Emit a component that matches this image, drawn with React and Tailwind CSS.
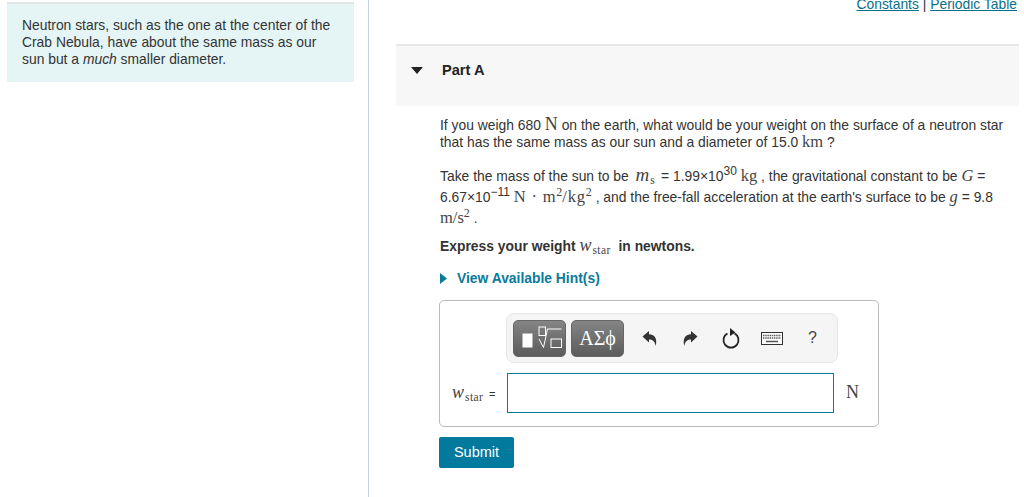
import React from "react";

const M = ({ children, i, c = "" }) => (
  <span className={`font-['Liberation_Serif',serif] text-[16.5px] leading-[0] text-[#444] ${i ? "italic" : ""} ${c}`}>{children}</span>
);
const Sup = ({ children }) => <span className="text-[12px] align-[6px] leading-[0] tracking-normal">{children}</span>;
const Sub = ({ children }) => <span className="text-[11.5px] align-[-3px] leading-[0] not-italic font-['Liberation_Serif',serif] tracking-[0.4px]">{children}</span>;

const Undo = ({ flip }) => (
  <svg width="16" height="17" viewBox="0 0 16 17" className={flip ? "-scale-x-100" : ""}>
    <path d="M0.5 6.5 L7 1 V4.2 C12 4.2 15.5 7.5 13.8 16 C12.8 11 10.6 9.4 7 9.4 V12.4 Z" fill="#333" />
  </svg>
);

export default function App() {
  return (
    <div className="w-[1024px] h-[497px] overflow-hidden flex bg-white font-['Liberation_Sans',Arial,sans-serif] text-[#333] text-[13.86px]">
      <div className="w-[369px] h-full shrink-0 border-r border-[#c3d4e8] pt-[2px] pl-[7px] pr-[14px]">
        <div className="h-[80px] bg-[#e5f5f6] border-t-2 border-[#e3e6e8] pt-[13px] pl-[15px] leading-[17px]">
          Neutron stars, such as the one at the center of the<br />
          Crab Nebula, have about the same mass as our<br />
          sun but a <em>much</em> smaller diameter.
        </div>
      </div>

      <div className="flex-1 pl-[27px] pr-[5px]">
        <div className="h-[44px] -mt-[4px] pr-[2px] text-right leading-[17px] text-[#333]">
          <a className="underline text-[#0a6f8a]">Constants</a> | <a className="underline text-[#0a6f8a]">Periodic Table</a>
        </div>

        <div className="h-[62px] mt-[4px] bg-[#f7f7f7] border-t-2 border-[#e8e8e8] flex items-center pb-[10px]">
          <svg width="12" height="8" viewBox="0 0 12 8" className="ml-[15px]">
            <path d="M0 0 H12 L6 7 Z" fill="#222" />
          </svg>
          <span className="ml-[19px] text-[14.6px] font-bold text-[#222]">Part A</span>
        </div>

        <div className="pl-[44px] pr-[9px]">
          <p className="mt-[11px] leading-[17px]">
            If you weigh 680 <M c="text-[18px]">N</M> on the earth, what would be your weight on the surface of a neutron star<br />
            that has the same mass as our sun and a diameter of 15.0 <M>km</M> ?
          </p>
          <p className="mt-[15px] leading-[21px]">
            Take the mass of the sun to be <M i c="text-[19px] tracking-[1px] ml-[3px] mr-[2px]">m<Sub>s</Sub></M> = 1.99×10<Sup>30</Sup> <M>kg</M> , the gravitational constant to be <M i>G</M> =<br />
            6.67×10<Sup>−11</Sup> <M c="tracking-[0.8px]">N · m<Sup>2</Sup>/kg<Sup>2</Sup></M> , and the free-fall acceleration at the earth's surface to be <M i>g</M> = 9.8<br />
            <M>m/s<Sup>2</Sup></M> .
          </p>
          <p className="mt-[9px] leading-[17px] font-bold">
            Express your weight <span className="font-normal"><M i c="text-[18px] tracking-[1px] mr-[4px]">w<Sub>star</Sub></M></span> in newtons.
          </p>
          <div className="mt-[15px] flex items-center h-[17px] font-bold text-[#0a7a9c]">
            <svg width="7" height="11" viewBox="0 0 7 11"><path d="M0 0 L7 5.5 L0 11 Z" fill="#0a7a9c" /></svg>
            <span className="ml-[10px]">View Available Hint(s)</span>
          </div>

          <div className="mt-[13px] -ml-[1px] w-[440px] h-[127px] border border-[#bbb] rounded-[5px] pt-[12px]">
            <div className="ml-[66px] w-[332px] h-[50px] bg-[#f5f5f5] border border-[#e6e6e6] rounded-[8px] flex items-center pl-[6px]">
              <div className="w-[53px] h-[37px] rounded-[5px] bg-gradient-to-b from-[#858585] to-[#5c5c5c] border border-[#666] flex items-center justify-center">
                <svg width="46" height="30" viewBox="0 0 46 30" fill="none" stroke="#fff" strokeWidth="1">
                  <rect x="5.5" y="10.5" width="10" height="14" fill="#fff" stroke="none" />
                  <rect x="22" y="4" width="6.5" height="8.5" />
                  <path d="M22 16 L26.5 24.5 L30.5 6 H44.5" />
                  <rect x="34" y="16" width="10.5" height="8.5" />
                </svg>
              </div>
              <div className="ml-[5px] w-[53px] h-[37px] rounded-[5px] bg-gradient-to-b from-[#858585] to-[#5c5c5c] border border-[#666] flex items-center justify-center font-['Liberation_Serif',serif] text-[20px] text-white">
                ΑΣϕ
              </div>
              <div className="ml-[18px]"><Undo /></div>
              <div className="ml-[24px]"><Undo flip /></div>
              <svg className="ml-[23px]" width="20" height="22" viewBox="0 0 20 22" fill="none">
                <path d="M6.5 6.5 A7.5 7.5 0 1 0 13.5 6.5" stroke="#222" strokeWidth="1.8" />
                <path d="M9 1 L14.5 5.5 L9 9 Z" fill="#222" />
              </svg>
              <svg className="ml-[20px]" width="22" height="13" viewBox="0 0 22 13" fill="none">
                <rect x="0.5" y="0.5" width="21" height="12" fill="#fff" stroke="#333" />
                <path d="M2 3.5 H20 M2 6 H20" stroke="#555" strokeWidth="1.4" strokeDasharray="1.4 0.8" />
                <path d="M5 9.5 H17" stroke="#555" strokeWidth="1.5" />
              </svg>
              <span className="ml-[25px] text-[16px] text-[#444]">?</span>
            </div>
            <div className="mt-[10px] flex items-center">
              <span className="w-[67px] pl-[12px] whitespace-nowrap">
                <M i c="text-[18px] tracking-[1px]">w<Sub>star</Sub></M> <span className="text-[11px] ml-[2px]">=</span>
              </span>
              <div className="w-[327px] h-[40px] border border-[#0a7a9c] bg-white"></div>
              <span className="ml-[12px]"><M c="text-[18px]">N</M></span>
            </div>
          </div>

          <div className="mt-[10px] -ml-[1px] w-[75px] h-[31px] bg-[#027a9e] rounded-[2px] flex items-center justify-center text-white text-[14.5px]">
            Submit
          </div>
        </div>
      </div>
    </div>
  );
}
